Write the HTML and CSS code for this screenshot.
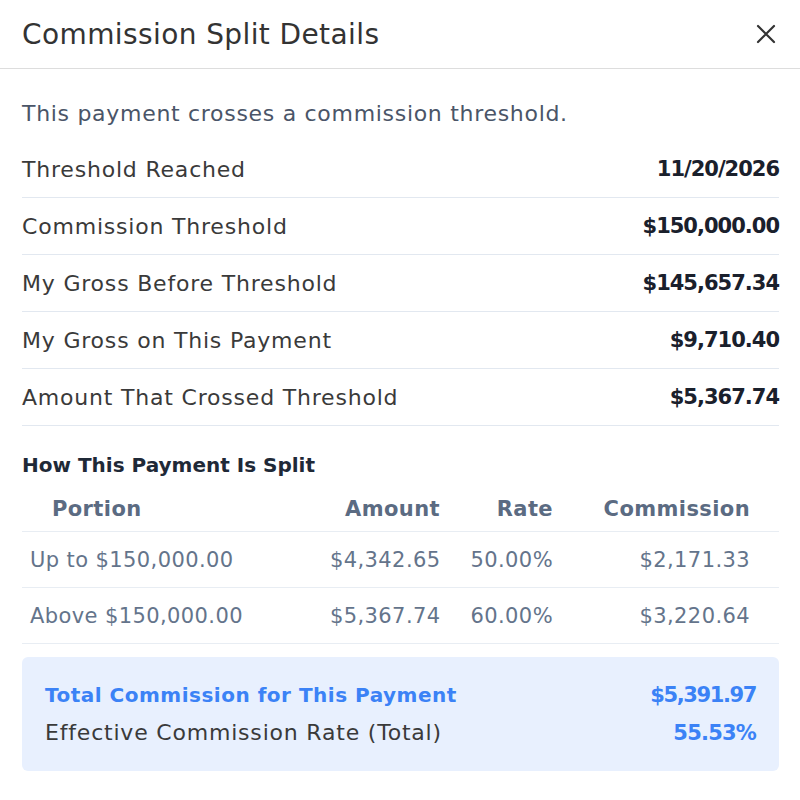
FILE: index.html
```html
<!DOCTYPE html>
<html>
<head>
<meta charset="utf-8">
<link rel="stylesheet" href="styles.css">
</head>
<body>
<div class="modal">
  <div class="header">
    <div class="title">Commission Split Details</div>
    <div class="close"><svg width="22" height="22" viewBox="0 0 22 22"><path d="M3 3 L19 19 M19 3 L3 19" stroke="#333" stroke-width="2.2" stroke-linecap="round"/></svg></div>
  </div>
  <div class="body">
    <div class="intro">This payment crosses a commission threshold.</div>
    <div class="rows">
      <div class="row"><span class="label">Threshold Reached</span><span class="value">11/20/2026</span></div>
      <div class="row"><span class="label">Commission Threshold</span><span class="value">$150,000.00</span></div>
      <div class="row"><span class="label">My Gross Before Threshold</span><span class="value">$145,657.34</span></div>
      <div class="row"><span class="label">My Gross on This Payment</span><span class="value">$9,710.40</span></div>
      <div class="row"><span class="label">Amount That Crossed Threshold</span><span class="value">$5,367.74</span></div>
    </div>
    <div class="section-title">How This Payment Is Split</div>
    <div class="table">
      <div class="trow thead">
        <span class="c1 h1">Portion</span><span class="num">Amount</span><span class="num">Rate</span><span class="num">Commission</span>
      </div>
      <div class="trow">
        <span class="c1">Up to $150,000.00</span><span class="num">$4,342.65</span><span class="num">50.00%</span><span class="num">$2,171.33</span>
      </div>
      <div class="trow">
        <span class="c1">Above $150,000.00</span><span class="num">$5,367.74</span><span class="num">60.00%</span><span class="num">$3,220.64</span>
      </div>
    </div>
    <div class="total">
      <div class="tline"><span class="tlabel">Total Commission for This Payment</span><span class="tval">$5,391.97</span></div>
      <div class="tline"><span class="eff">Effective Commission Rate (Total)</span><span class="tval rate">55.53%</span></div>
    </div>
  </div>
</div>
</body>
</html>
```
FILE: styles.css
```css
html, body { margin: 0; padding: 0; background: #fff; }
body { font-family: "DejaVu Sans", "Open Sans", sans-serif; color: #333; }
.modal { width: 800px; }
.header {
  height: 69px;
  border-bottom: 1px solid #dddddd;
  display: flex;
  align-items: center;
  justify-content: space-between;
  padding: 0 22px;
  box-sizing: border-box;
}
.title { font-size: 28px; letter-spacing: 0.4px; color: #333; font-weight: 400; }
.close { width: 22px; height: 22px; margin-right: 1px; display: flex; }
.body { padding: 30px 21px 0 22px; }
.intro { font-size: 22px; letter-spacing: 0.7px; line-height: 30px; color: #4a5568; margin-bottom: 12px; }
.row {
  height: 56px;
  border-bottom: 1px solid #e2e8f0;
  display: flex;
  align-items: center;
  justify-content: space-between;
}
.label { font-size: 22px; letter-spacing: 0.8px; color: #3a3a3a; }
.value { font-size: 21px; letter-spacing: -1px; font-weight: 700; color: #1a202c; }
.section-title { font-size: 20px; font-weight: 700; color: #1f2937; line-height: 30px; margin-top: 24px; }
.table { font-size: 21px; letter-spacing: 0.4px; color: #64748b; }
.trow {
  display: grid;
  grid-template-columns: 1fr 110px 113px 197px;
  padding: 0 29px 0 8px;
  height: 55px;
  align-items: center;
  border-bottom: 1px solid #e8edf3;
}
.thead { height: 44px; padding-top: 7px; font-weight: 600; color: #5b6b82; }
.h1 { padding-left: 22px; }
.num { text-align: right; }
.total {
  margin-top: 13px;
  background: #e8f0fe;
  border-radius: 6px;
  padding: 23px 23px;
  display: flex;
  flex-direction: column;
  gap: 8px;
}
.tline { display: flex; justify-content: space-between; align-items: center; line-height: 30px; }
.tlabel { font-size: 20px; letter-spacing: 0.5px; color: #3b82f6; font-weight: 700; }
.tval { font-size: 21px; letter-spacing: -1.4px; color: #3b82f6; font-weight: 700; }
.rate { letter-spacing: -0.8px; }
.eff { font-size: 22px; letter-spacing: 0.8px; color: #3a3a3a; }
```
